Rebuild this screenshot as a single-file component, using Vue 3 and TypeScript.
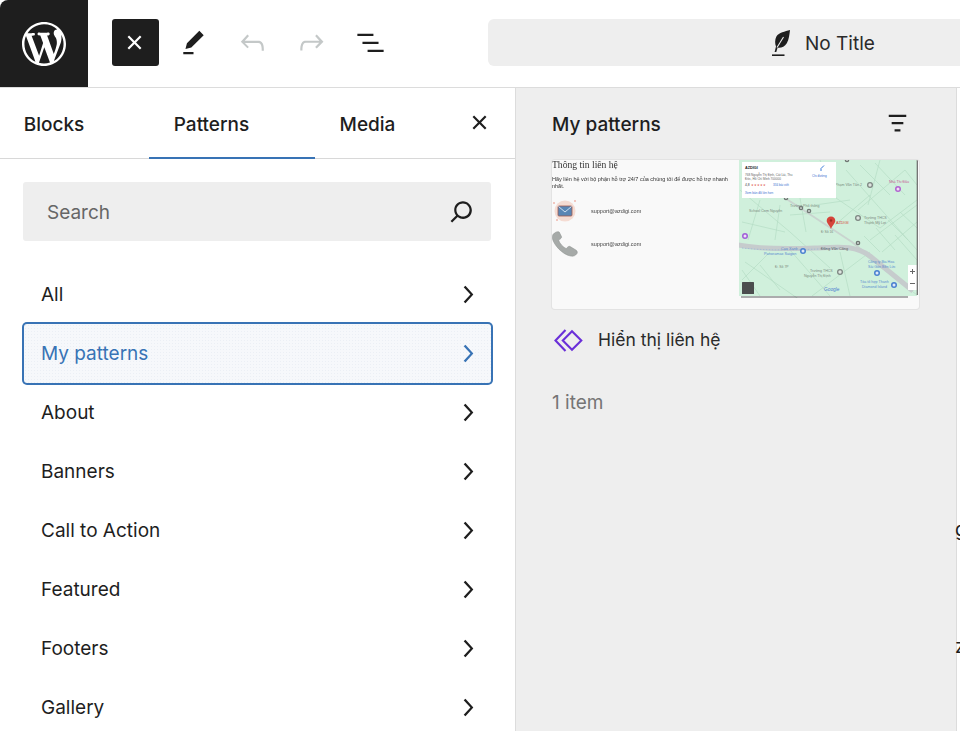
<script setup lang="ts">
const categories: string[] = ['All', 'My patterns', 'About', 'Banners', 'Call to Action', 'Featured', 'Footers', 'Gallery']
const tabs: string[] = ['Blocks', 'Patterns', 'Media']
const thinRoads: string[] = [
  'M740 190L790 232L830 268', 'M745 262L800 300', 'M770 252L742 280', 'M790 250L830 296', 'M812 296L870 252',
  'M836 198L880 228L917 200', 'M846 170L917 250', 'M858 210L905 170', 'M880 160L868 205', 'M870 240L917 205',
  'M882 252L917 222', 'M858 250L917 295', 'M800 198L806 232', 'M820 160L836 198', 'M760 200L748 240',
  'M780 205L775 240', 'M905 170L917 185', 'M835 225L870 195', 'M895 235L917 260', 'M840 252L850 296',
  'M876 228L895 250', 'M888 220L908 240', 'M900 212L917 228', 'M864 236L880 252', 'M760 265L780 290', 'M742 270L760 296',
  'M860 165L890 195', 'M875 163L905 195', 'M790 215L830 212', 'M815 205L850 200', 'M742 222L785 232'
]
const markers: { x: number; y: number }[] = [
  { x: 786, y: 198 }, { x: 801, y: 208 }, { x: 809, y: 211 }, { x: 858, y: 243 }, { x: 847, y: 160 }
]
const mapLabels: { x: number; y: number; t: string; c: string; s: number }[] = [
  { x: 835, y: 186, t: 'Phạm Văn Tân 2', c: '#7b8a80', s: 3.6 },
  { x: 889, y: 183, t: 'Nhà Thi Đấu', c: '#c75a94', s: 3.6 },
  { x: 790, y: 207, t: 'Trường Phổ thông', c: '#7b8a80', s: 3.6 },
  { x: 749, y: 212, t: 'School Cơm Nguyên', c: '#7b8a80', s: 3.6 },
  { x: 864, y: 219, t: 'Trường THCS', c: '#7b8a80', s: 3.6 },
  { x: 864, y: 224, t: 'Thạnh Mỹ Lợi', c: '#7b8a80', s: 3.6 },
  { x: 821, y: 233, t: 'Đ Số 16', c: '#7b8a80', s: 3.4 },
  { x: 821, y: 250, t: 'Đồng Văn Cống', c: '#55605a', s: 3.8 },
  { x: 781, y: 250, t: 'Cao Xanh', c: '#5c8bd0', s: 3.8 },
  { x: 764, y: 255, t: 'Panoramax Saigon', c: '#5c8bd0', s: 3.8 },
  { x: 810, y: 272, t: 'Trường THCS', c: '#7b8a80', s: 3.6 },
  { x: 804, y: 277, t: 'Nguyễn Thị Định', c: '#7b8a80', s: 3.6 },
  { x: 868, y: 263, t: 'Công ty Bia Hoa', c: '#5c8bd0', s: 3.6 },
  { x: 868, y: 268, t: 'Sài Gòn Bến Lức', c: '#5c8bd0', s: 3.6 },
  { x: 860, y: 283, t: 'Tòa tổ hợp Thanh', c: '#5c8bd0', s: 3.6 },
  { x: 862, y: 288, t: 'Diamond Island', c: '#5c8bd0', s: 3.6 },
  { x: 775, y: 268, t: 'Đ. Số 7P', c: '#7b8a80', s: 3.4 }
]
</script>

<template>
  <div class="app">
    <header class="topbar">
      <div class="logo">
        <svg class="wp" viewBox="0 0 20 20" aria-hidden="true"><path fill="#fff" d="M20 10c0-5.51-4.49-10-10-10C4.48 0 0 4.49 0 10c0 5.52 4.48 10 10 10 5.51 0 10-4.48 10-10zM7.78 15.37L4.37 6.22c.55-.02 1.17-.08 1.17-.08.5-.06.44-1.13-.06-1.11 0 0-1.45.11-2.37.11-.18 0-.37 0-.58-.01C4.12 2.69 6.87 1.07 10 1.07c2.33 0 4.45.87 6.05 2.34-.68-.11-1.65.39-1.65 1.58 0 .74.45 1.36.9 2.1.35.61.55 1.36.55 2.46 0 1.49-1.4 5-1.4 5l-3.03-8.37c.54-.02.82-.17.82-.17.5-.05.44-1.25-.06-1.22 0 0-1.44.12-2.38.12-.87 0-2.33-.12-2.33-.12-.5-.03-.56 1.2-.06 1.22l.92.08 1.26 3.41zM17.41 10c.24-.64.74-1.87.43-4.25.7 1.29 1.05 2.71 1.05 4.25 0 3.29-1.73 6.24-4.4 7.78.97-2.59 1.94-5.2 2.92-7.78zM6.1 18.09C3.12 16.65 1.11 13.53 1.11 10c0-1.3.23-2.48.72-3.59C3.25 10.3 4.67 14.2 6.1 18.09zm4.03-6.63l2.58 6.98c-.86.29-1.76.45-2.71.45-.79 0-1.57-.11-2.29-.33.81-2.38 1.62-4.74 2.42-7.1z"/></svg>
      </div>
      <div class="tools">
        <button class="tool dark">
          <svg viewBox="0 0 24 24"><path fill="#fff" d="M12 13.06l3.712 3.713 1.061-1.06L13.061 12l3.712-3.712-1.06-1.06L12 10.938 8.288 7.227l-1.061 1.06L10.939 12l-3.712 3.712 1.06 1.061L12 13.061z"/></svg>
        </button>
        <button class="tool">
          <svg viewBox="0 0 24 24"><path fill="#1e1e1e" d="m19 7-3-3-8.500 8.500-1 4 4-1L19 7Zm-7 11.500H5V20h7v-1.500Z"/></svg>
        </button>
        <button class="tool">
          <svg viewBox="0 0 24 24"><path fill="#c4c8c8" d="M18.300 11.700c-.6-.6-1.400-.9-2.300-.9H6.700l2.900-3.300-1.100-1-4.500 5L8.500 16l1-1-2.700-2.700H16c.5 0 .9.2 1.300.5 1 1 1 3.400 1 4.500v.3h1.500v-.2c0-1.500 0-4.300-1.500-5.700z"/></svg>
        </button>
        <button class="tool">
          <svg viewBox="0 0 24 24"><path fill="#c4c8c8" d="M15.600 6.500l-1.100 1 2.900 3.300H8c-.9 0-1.700.3-2.300.9-1.400 1.500-1.400 4.200-1.400 5.600v.2h1.500v-.3c0-1.100 0-3.500 1-4.500.3-.3.7-.5 1.300-.5h9.200L14.500 15l1.100 1.100 4.600-4.600-4.600-5z"/></svg>
        </button>
        <button class="tool">
          <svg viewBox="0 0 24 24"><path fill="#1e1e1e" d="M3 6h11v1.500H3V6zm3.500 5.500h11V13h-11v-1.500zM21 17H10v1.500h11V17z"/></svg>
        </button>
      </div>
      <div class="title-bar">
        <svg class="feather" viewBox="0 0 18 26"><path fill="#1e1e1e" d="M18 0c-5 1.600-11 2.400-13.600 6.500C2.700 9.400 2.900 14 4 16.600L2.600 22h1.700l1.300-4.300c3.500.5 7-.9 9.200-4.500C17 9.600 17.500 4 18 0z"/><path fill="none" stroke="#eee" stroke-width="1.100" d="M5 17.500L11.500 7"/><path fill="#1e1e1e" d="M0 24.400h12.500V26H0z"/></svg>
        <span>No Title</span>
      </div>
    </header>

    <main class="body">
      <aside class="sidebar">
        <nav class="tabs">
          <div v-for="tab in tabs" :key="tab" class="tab" :class="[tab.toLowerCase(), { active: tab === 'Patterns' }]">{{ tab }}</div>
          <svg class="tabs-close" viewBox="0 0 24 24"><path fill="#1e1e1e" d="M12 13.060l3.712 3.713 1.061-1.060L13.061 12l3.712-3.712-1.060-1.060L12 10.938 8.288 7.227l-1.061 1.060L10.939 12l-3.712 3.712 1.060 1.061L12 13.061z"/></svg>
        </nav>
        <div class="search">
          <span>Search</span>
          <svg viewBox="0 0 24 24"><path fill="#1e1e1e" d="M13 5c-3.300 0-6 2.700-6 6 0 1.400.5 2.700 1.300 3.700l-3.800 3.800 1.100 1.100 3.800-3.800c1 .8 2.300 1.300 3.700 1.300 3.300 0 6-2.700 6-6S16.300 5 13 5zm0 10.500c-2.500 0-4.500-2-4.500-4.500s2-4.500 4.500-4.500 4.500 2 4.500 4.500-2 4.500-4.500 4.500z"/></svg>
        </div>
        <ul class="cats">
          <li v-for="c in categories" :key="c" class="cat" :class="{ selected: c === 'My patterns' }">
            <span>{{ c }}</span>
            <svg viewBox="0 0 24 24"><path fill="currentColor" d="M10.600 6L9.400 7l4.600 5-4.600 5 1.200 1 5.400-6z"/></svg>
          </li>
        </ul>
      </aside>

      <section class="preview">
        <div class="preview-head">
          <h2>My patterns</h2>
          <svg viewBox="0 0 24 24"><path fill="#1e1e1e" d="M10 17.500H14V16H10V17.500ZM6 6V7.500H18V6H6ZM8 12.500H16V11H8V12.500Z"/></svg>
        </div>

        <div class="thumb">
          <div class="contact">
            <div class="contact-title">Thông tin liên hệ</div>
            <p class="contact-text">Hãy liên hệ với bộ phận hỗ trợ 24/7 của chúng tôi để được hỗ trợ nhanh nhất.</p>
            <div class="contact-row mail">
              <svg viewBox="0 0 26 26"><circle cx="13" cy="13" r="10.500" fill="#f5dcd3"/><circle cx="2" cy="5" r=".8" fill="#e98a78"/><circle cx="23" cy="3" r=".8" fill="#e98a78"/><circle cx="5" cy="22" r=".8" fill="#e98a78"/><rect x="6" y="8" width="14" height="10" rx="1" fill="#5a86b4" stroke="#a05a52" stroke-width=".8"/><path d="M6.500 8.500L13 14l6.500-5.500" fill="none" stroke="#cfe0f0" stroke-width="1"/></svg>
              <span>support@azdigi.com</span>
            </div>
            <div class="contact-row phone">
              <svg viewBox="0 0 26 26"><path fill="#a6aaa8" stroke="#8a8e8c" stroke-width=".5" d="M1 3.500C3 .8 6 .2 7.200 1l2.300 4.600c.3.8-.2 1.600-1 2.200L6.600 9c1 3.400 4.200 7 7.600 8.600l1.600-1.600c.8-.8 1.600-.9 2.400-.4l6 3.600c1.200 1 1.500 2.400.6 3.600-1.300 1.800-3.500 2.800-6 2.300C10.400 23.600 1.800 14 .4 7.500.2 6 .4 4.600 1 3.500z"/></svg>
              <span>support@azdigi.com</span>
            </div>
          </div>

          <svg class="map" viewBox="739 160 180 138">
            <rect x="739" y="160" width="178" height="136" fill="#d0f0dc"/>
            <path v-for="(d, i) in thinRoads" :key="'t' + i" :d="d" fill="none" stroke="#b4dcc4" stroke-width=".7"/>
            <path d="M785 198L852 242L880 265" fill="none" stroke="#c9d4cf" stroke-width="1.800"/>
            <path d="M738 245C760 249 790 249 815 248C840 247 855 245 870 256L913 291" fill="none" stroke="#c6cccd" stroke-width="5"/>
            <path d="M742 248C770 251 800 250 840 248" fill="none" stroke="#8bb3d8" stroke-width=".6" stroke-dasharray="1.500 1.500"/>
            <g v-for="(m, i) in markers" :key="'m' + i">
              <circle :cx="m.x" :cy="m.y" r="2.300" fill="#6f7773"/>
              <circle :cx="m.x" :cy="m.y" r="1" fill="#cdd5d0"/>
            </g>
            <circle cx="858" cy="218" r="3" fill="#7d8682"/><circle cx="858" cy="218" r="1.700" fill="#dde5e0"/>
            <circle cx="870" cy="185" r="3" fill="#7d8682"/><circle cx="870" cy="185" r="1.700" fill="#dde5e0"/>
            <circle cx="840" cy="272" r="3" fill="#7d8682"/><circle cx="840" cy="272" r="1.700" fill="#dde5e0"/>
            <circle cx="898" cy="189" r="3" fill="#b064d0"/><circle cx="898" cy="189" r="1.500" fill="#f1e0f6"/>
            <circle cx="745" cy="236" r="3" fill="#a05fd8"/><circle cx="745" cy="236" r="1.500" fill="#efe0f8"/>
            <circle cx="803" cy="251" r="3" fill="#4a80d0"/><circle cx="803" cy="251" r="1.500" fill="#e0e8f8"/>
            <circle cx="877" cy="273" r="3" fill="#4a80d0"/><circle cx="877" cy="273" r="1.500" fill="#e0e8f8"/>
            <circle cx="894" cy="285" r="3" fill="#4a80d0"/><circle cx="894" cy="285" r="1.500" fill="#e0e8f8"/>
            <text v-for="l in mapLabels" :key="l.t + l.x" :x="l.x" :y="l.y" :fill="l.c" :font-size="l.s" class="map-text">{{ l.t }}</text>

            <rect x="742" y="162" width="94" height="36" fill="#fff"/>
            <text x="745" y="169" font-size="3.800" font-weight="700" fill="#222" class="map-text">AZDIGI</text>
            <text x="745" y="175.500" font-size="3.100" fill="#666" class="map-text">768 Nguyễn Thị Định, Cát Lái, Thủ</text>
            <text x="745" y="179.500" font-size="3.100" fill="#666" class="map-text">Đức, Hồ Chí Minh 700000</text>
            <text x="745" y="185.500" font-size="3.400" fill="#444" class="map-text">4,8 <tspan fill="#e0513e">★★★★★</tspan></text>
            <text x="773" y="185.500" font-size="3.100" fill="#3a6fd0" class="map-text">334 bài viết</text>
            <text x="745" y="194" font-size="3.100" fill="#3a6fd0" class="map-text">Xem bản đồ lớn hơn</text>
            <path d="M821 171v-2.500l3-3" fill="none" stroke="#3a7ad8" stroke-width="1"/>
            <text x="812" y="177" font-size="3.100" fill="#3a6fd0" class="map-text">Chỉ đường</text>

            <path d="M831 216.500c-2.600 0-4.300 1.900-4.300 4.200 0 2.700 3 4.300 4.300 8.300 1.300-4 4.300-5.600 4.300-8.300 0-2.300-1.700-4.200-4.300-4.200z" fill="#d5443a"/>
            <circle cx="831" cy="220.500" r="1.200" fill="#9e2a22"/>
            <text x="836" y="224" font-size="3.800" fill="#d5443a" class="map-text">AZDIGI</text>

            <rect x="908" y="265" width="9" height="25" fill="#fff"/>
            <path d="M912.500 269v5M910 271.500h5M910 283.500h5" stroke="#666" stroke-width="1" fill="none"/>
            <rect x="742" y="282" width="12" height="12" rx=".5" fill="#4b4d4e"/>
            <text x="824" y="291" font-size="4.800" class="map-text" fill="#4a7bd0">Google</text>
            <path d="M917.300 160v135" stroke="#666" stroke-width="1.200"/>
            <path d="M741 297h167" stroke="#5f6062" stroke-width="1.200"/>
          </svg>
        </div>

        <div class="pattern-label">
          <svg viewBox="0 0 29 23"><path fill="none" stroke="#6a2fd8" stroke-width="2.100" d="M18 2.200L8.800 11.500L18 20.800L27.300 11.500zM11.500 1L1.500 11.500L11.500 22"/></svg>
          <span>Hiển thị liên hệ</span>
        </div>
        <div class="count">1 item</div>
      </section>

      <div class="edge">
        <span class="edge-a">g</span>
        <span class="edge-b">z</span>
      </div>
    </main>
  </div>
</template>

<style scoped>
.app {
  width: 960px;
  height: 731px;
  overflow: hidden;
  background: #fff;
  font-family: Inter, "Noto Sans", sans-serif;
  color: #1e1e1e;
  display: flex;
  flex-direction: column;
}
.topbar {
  height: 88px;
  flex: none;
  display: flex;
  align-items: center;
  border-bottom: 1px solid #dcdcdc;
  box-sizing: border-box;
  overflow: hidden;
}
.logo {
  width: 88px;
  height: 87px;
  flex: none;
  background: #1e1e1e;
  border-top-left-radius: 8px;
  display: flex;
  align-items: center;
  justify-content: center;
}
.wp { width: 44px; height: 44px; }
.tools {
  display: flex;
  gap: 12px;
  margin-left: 24px;
  margin-top: -2px;
  flex: none;
}
.tool {
  width: 47px;
  height: 47px;
  padding: 0;
  border: 0;
  background: none;
  border-radius: 3px;
  display: flex;
  align-items: center;
  justify-content: center;
}
.tool svg { width: 35px; height: 35px; margin-left: -2px; }
.tool.dark { background: #1e1e1e; }
.title-bar {
  width: 640px;
  height: 47px;
  flex: none;
  margin-left: 93px;
  margin-top: -2px;
  padding-left: 284px;
  box-sizing: border-box;
  background: #eee;
  border-radius: 6px;
  display: flex;
  align-items: center;
  gap: 15px;
  font-size: 19px;
  color: #2a2a2a;
}
.title-bar span { padding-top: 2px; }
.feather { width: 18px; height: 26px; flex: none; }
.body {
  flex: 1;
  min-height: 0;
  display: flex;
}
.sidebar {
  width: 516px;
  flex: none;
  box-sizing: border-box;
  border-right: 1px solid #dcdcdc;
}
.tabs {
  height: 71px;
  box-sizing: border-box;
  display: flex;
  border-bottom: 1.500px solid #d8d8d8;
  position: relative;
}
.tab {
  display: flex;
  align-items: center;
  justify-content: center;
  font-size: 19px;
  font-weight: 500;
  height: 71px;
  padding-top: 2px;
  box-sizing: border-box;
}
.tab.blocks { width: 149px; padding-right: 41px; }
.tab.patterns { width: 166px; padding-right: 41px; }
.tab.media { width: 105px; }
.tab.active { border-bottom: 2.500px solid #3873b5; padding-top: 4.500px; }
.tabs-close {
  position: absolute;
  left: 462px;
  top: 17px;
  width: 35px;
  height: 35px;
}
.search {
  margin: 23px 24px 0 23px;
  height: 59px;
  background: #eee;
  border-radius: 3px;
  padding: 0 12px 0 24px;
  display: flex;
  align-items: center;
  justify-content: space-between;
  font-size: 19px;
  color: #666;
}
.search span { padding-top: 2px; }
.search svg { width: 35px; height: 35px; }
.cats {
  list-style: none;
  margin: 23.500px 0 0;
  padding: 0 24px;
}
.cat {
  height: 59px;
  padding: 0 6px 0 17px;
  display: flex;
  align-items: center;
  justify-content: space-between;
  font-size: 19px;
  color: #1e1e1e;
}
.cat svg { width: 35px; height: 35px; }
.cat.selected {
  color: #3873b5;
  border-radius: 3px;
  box-shadow: 0 0 0 2px #3873b5;
  background-color: #f6f8fb;
  background-image: radial-gradient(#ebeff5 .5px, transparent .6px);
  background-size: 3px 3px;
}
.preview {
  width: 441px;
  flex: none;
  box-sizing: border-box;
  background: #eee;
  border-right: 1px solid #dcdcdc;
  padding: 0 36px;
}
.preview-head {
  height: 71px;
  padding-right: 5px;
  display: flex;
  align-items: center;
  justify-content: space-between;
}
.preview-head h2 {
  margin: 0;
  font-size: 19px;
  font-weight: 500;
  padding-top: 2px;
}
.preview-head svg { width: 35px; height: 35px; }
.thumb {
  width: 367px;
  height: 149px;
  margin-top: 1px;
  background: #f9f9f9;
  border-radius: 3px;
  box-shadow: 0 0 0 1px #e3e3e3;
  display: flex;
  overflow: hidden;
  filter: blur(.45px);
}
.contact {
  width: 187px;
  flex: none;
  box-sizing: border-box;
}
.contact-title {
  font-family: "Liberation Serif", serif;
  font-size: 9.600px;
  line-height: 10px;
  color: #333;
}
.contact-text {
  margin: 6px 0 0;
  font-family: "Liberation Sans", sans-serif;
  font-size: 5.500px;
  line-height: 7px;
  color: #333;
  width: 178px;
}
.contact-row {
  display: flex;
  align-items: center;
  font-family: "Liberation Sans", sans-serif;
  font-size: 5.500px;
  color: #444;
}
.contact-row svg { width: 26px; height: 26px; flex: none; }
.contact-row span { margin-left: 13px; }
.contact-row.mail { margin-top: 8px; }
.contact-row.phone { margin-top: 7px; }
.map { width: 180px; height: 138px; flex: none; display: block; }
.map-text { font-family: "Liberation Sans", sans-serif; }
.pattern-label {
  margin-top: 19px;
  height: 24px;
  display: flex;
  align-items: center;
  gap: 15px;
  font-size: 17.500px;
  color: #2a2a2a;
  margin-left: 2px;
}
.pattern-label svg { width: 29px; height: 23px; flex: none; }
.pattern-label span { margin-top: -2px; }
.count {
  margin-top: 39px;
  font-size: 19px;
  color: #757575;
}
.edge {
  flex: 1;
  min-width: 0;
  position: relative;
  margin-left: -2px;
}
.edge span {
  position: absolute;
  left: 0;
  font-size: 19px;
  line-height: 23px;
  color: #1e1e1e;
  width: 5px;
  overflow: hidden;
}
.edge-a { top: 430px; }
.edge-b { top: 547px; }
</style>

<style>
html, body { margin: 0; overflow: hidden; background: #fff; }
</style>
